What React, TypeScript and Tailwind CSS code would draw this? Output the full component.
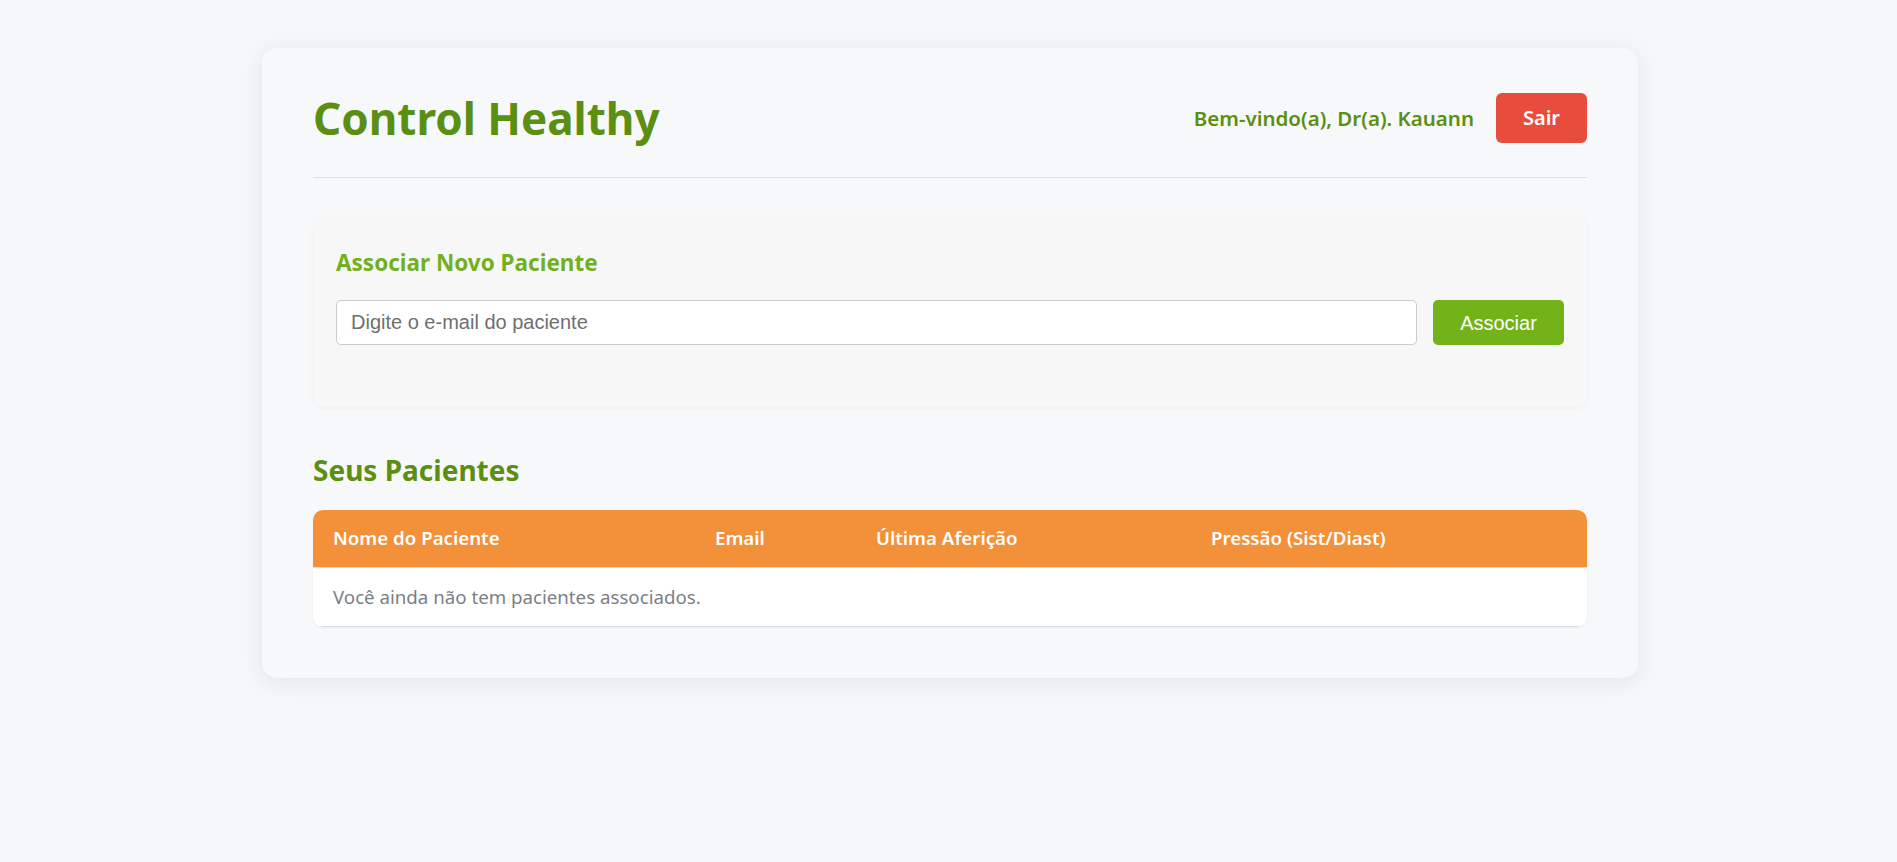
import React from 'react';

const head = { fontFamily: '"Noto Sans", "Open Sans", sans-serif' };
const arial = { fontFamily: '"Liberation Sans", Arial, sans-serif' };

const Header = () => (
  <header className="flex items-center justify-between border-b border-[#dcdfe4] pb-[34px]">
    <h1 className="text-[44px] font-bold leading-none text-[#5a8f12]" style={head}>
      Control Healthy
    </h1>
    <div className="flex items-center gap-[22px]">
      <span className="text-[20.5px] font-semibold text-[#5a8f12]" style={head}>
        Bem-vindo(a), Dr(a). Kauann
      </span>
      <button
        className="h-[50px] w-[91px] rounded-[6px] bg-[#e74c3c] text-[20px] font-semibold text-white"
        style={head}
      >
        Sair
      </button>
    </div>
  </header>
);

const AssociateBox = () => (
  <section className="mt-[38px] rounded-[10px] bg-[#f7f7f8] px-[23px] pb-[62px] pt-[32px] shadow-[0_1px_4px_rgba(0,0,0,0.04)]">
    <h3 className="mb-[22px] text-[22.5px] font-bold leading-[30px] text-[#72b01d]" style={head}>
      Associar Novo Paciente
    </h3>
    <div className="flex gap-[16px]">
      <input
        className="h-[45px] flex-1 rounded-[5px] border border-[#c6cbd2] bg-white px-[14px] text-[20px] text-[#333] placeholder:text-[#6f6f6f] outline-none"
        style={arial}
        placeholder="Digite o e-mail do paciente"
      />
      <button
        className="h-[45px] w-[131px] rounded-[5px] bg-[#74b21a] text-[20px] text-white"
        style={arial}
      >
        Associar
      </button>
    </div>
  </section>
);

const PatientsTable = () => (
  <section>
    <h2 className="mb-[23px] mt-[46px] text-[28px] font-bold leading-[34px] text-[#5a8f12]" style={head}>
      Seus Pacientes
    </h2>
    <div className="overflow-hidden rounded-[10px] bg-white shadow-[0_1px_3px_rgba(0,0,0,0.05)]" style={head}>
      <div className="grid h-[58px] grid-cols-[382px_161px_335px_1fr] items-center border-b border-[#dcdfe4] bg-[#f2913a] text-[18.7px] font-semibold text-white">
        <div className="pl-[20px]">Nome do Paciente</div>
        <div className="pl-[20px]">Email</div>
        <div className="pl-[20px]">Última Aferição</div>
        <div className="pl-[20px]">Pressão (Sist/Diast)</div>
      </div>
      <div className="flex h-[59px] items-center border-b border-[#d8dbe0] pl-[20px] text-[18.7px] text-[#7a7f86]">
        Você ainda não tem pacientes associados.
      </div>
    </div>
  </section>
);

export default function App() {
  return (
    <div className="min-h-screen bg-[#f5f6f8] pl-[3px] pt-[48px]">
      <main className="mx-auto w-[1376px] rounded-[15px] bg-[#f7f8fa] px-[51px] pb-[51px] pt-[45px] shadow-[0_4px_20px_rgba(0,0,0,0.07)]">
        <Header />
        <AssociateBox />
        <PatientsTable />
      </main>
    </div>
  );
}
